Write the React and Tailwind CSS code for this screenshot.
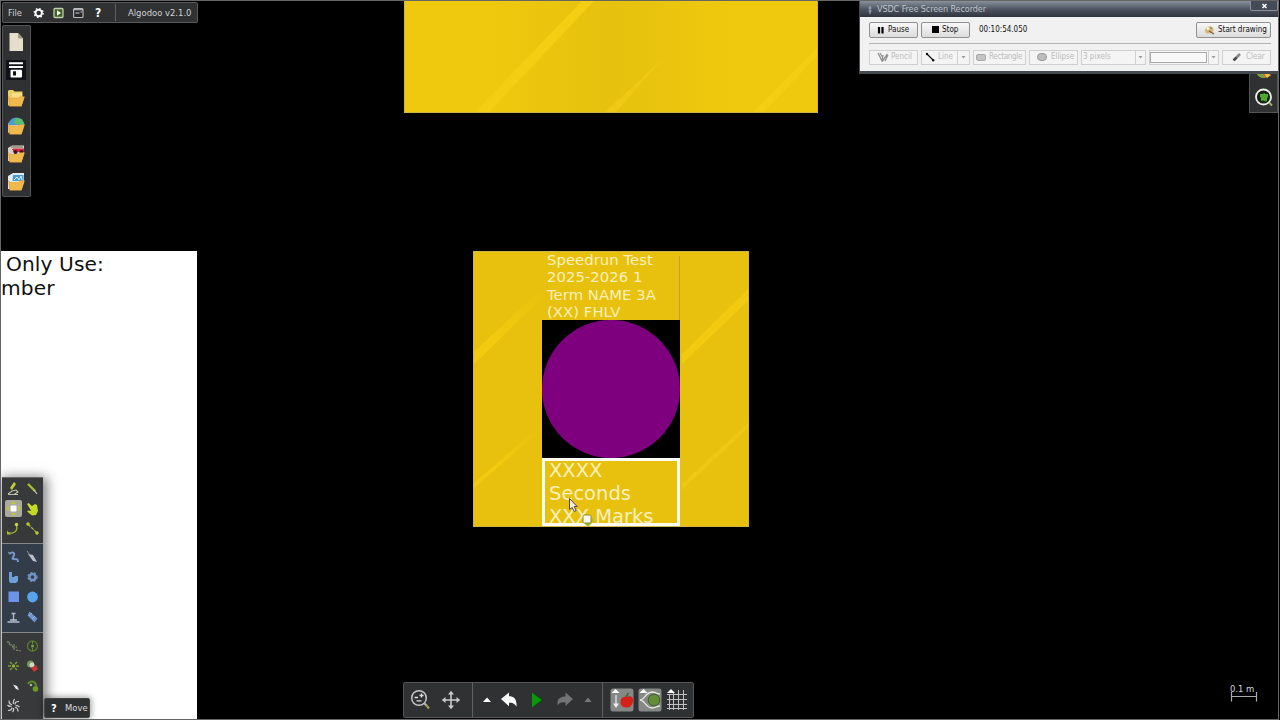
import React from "react";

const UI = "font-['DejaVu_Sans_Condensed','DejaVu_Sans',sans-serif] [font-stretch:condensed]";

function Icon({ w = 20, h = 20, className = "", children }) {
  return (
    <svg width={w} height={h} viewBox={`0 0 ${w} ${h}`} className={`block shrink-0 ${className}`} fill="none">
      {children}
    </svg>
  );
}

function MenuBar() {
  return (
    <div className={`absolute left-[2px] top-[2px] flex h-[21px] w-[196px] items-center rounded-[2px] border border-[#5a5a5c] bg-[#303133] text-[9.4px] leading-none text-[#d2d2d2] ${UI}`}>
      <span className="w-[26px] pl-[5px]">File</span>
      <Icon w={20} h={18}>
        <circle cx="9.7" cy="9" r="3.2" stroke="#fff" strokeWidth="1.9" />
        <circle cx="9.7" cy="9" r="4.5" stroke="#fff" strokeWidth="1.3" strokeDasharray="1.6 1.93" />
      </Icon>
      <Icon w={20} h={18}>
        <rect x="5" y="4.500" width="9" height="9" rx="1" fill="#3f5f28" stroke="#c2cfae" strokeWidth="1.3" />
        <path d="M8 6.300v5.400L12 9z" fill="#f4fff0" />
      </Icon>
      <Icon w={20} h={18}>
        <rect x="4.600" y="4.500" width="9.400" height="9" rx="1" fill="#252628" stroke="#bfbfbf" strokeWidth="1.1" />
        <path d="M5 5.800h9M6.500 9h4M11.500 8h1.500" stroke="#d8d8d8" strokeWidth="1.1" />
      </Icon>
      <span className="w-[26px] pl-[6px] text-[12px] font-bold text-white">?</span>
      <span className="h-[17px] w-px bg-[#606062]" />
      <span className="whitespace-nowrap pl-[12px]">Algodoo v2.1.0</span>
    </div>
  );
}

function Folder({ children }) {
  return (
    <Icon>
      {children}
      <path d="M2 7.500l1.500 11H15.500L18.800 8.500H14L12.500 10H4z" fill="#e9a83c" />
      <path d="M3.700 10.500L12.800 10.500 14.500 9H18.300L15.500 18H4.500z" fill="#f0b950" />
    </Icon>
  );
}

function FileBar() {
  return (
    <div className="absolute left-[2px] top-[25px] flex h-[172px] w-[29px] flex-col items-start gap-2 rounded-[2px] border border-[#555557] bg-[#303133] pl-[3px] pt-[6px]">
      <Icon>
        <path d="M3.500 1H12L17 6.500V19H3.500z" fill="#e5decb" />
        <path d="M12 1V6.500H17z" fill="#a39d8c" />
      </Icon>
      <Icon>
        <rect width="20" height="20" fill="#111118" />
        <path d="M3 3.200H17M3 7H17" stroke="#fff" strokeWidth="1.900" />
        <rect x="4.500" y="9.800" width="11.500" height="7.600" rx="1" fill="#fff" />
        <rect x="7" y="11.300" width="3" height="4.200" fill="#111" />
      </Icon>
      <Folder>
        <path d="M2 17V3l1-1h4l1.500 1.500H16.500V10L3 18z" fill="#eccf60" />
        <path d="M6 5h10v4H6z" fill="#f5df86" />
      </Folder>
      <Folder>
        <path d="M2 17V7H17v4z" fill="#d8c497" />
        <path d="M2 9a8.300 8.300 0 0 1 16.500 0z" fill="#4a9bd0" />
        <path d="M10 2l6 1 2.500 5.500H10L8 6z" fill="#5dbb69" />
      </Folder>
      <Folder>
        <path d="M2 17V4l4-2.500H18V10L4 17z" fill="#d7d0c6" />
        <path d="M5 3h12M6 5.500h3" stroke="#665" strokeWidth="1" />
        <path d="M7 4.500H18V8H7z" fill="#d32d4b" />
        <circle cx="9.500" cy="8" r="2" fill="#421018" /><circle cx="15.500" cy="8" r="2" fill="#421018" />
      </Folder>
      <Folder>
        <path d="M2 17V4L7 1H18V10L4 17z" fill="#e0eaf0" />
        <path d="M7 3h10.500v6H6z" fill="#4b9ad8" />
        <path d="M4 5v5M6 4v5M8 8l3-3 2 3 2-4 1 4" stroke="#e8f5ff" strokeWidth=".9" />
      </Folder>
    </div>
  );
}

const T = ({ children }) => <Icon w={19} h={20}>{children}</Icon>;

function ToolPanel() {
  return (
    <div className="absolute left-[2px] top-[477px] flex h-[242px] w-[41px] flex-col border-t border-[#69696a] bg-[#37393b] shadow-[2px_2px_11px_2px_rgba(0,0,0,0.5)]">
      <div className="flex h-[66px] flex-wrap content-start border-b border-[#868789] pl-[2px] pt-[1px]">
        <T><path d="M6 9l4-6 2 2-4 6z" fill="#c0d030" /><path d="M4 15l4-3 4-1 2 2-4 2.500H4M9 15.500h5" stroke="#c0c4ac" strokeWidth="1.100" /></T>
        <T><path d="M5 5l7 7" stroke="#a8bc30" strokeWidth="2.400" /><path d="M11 11l3 4" stroke="#c7cabb" strokeWidth="1.200" /></T>
        <T>
          <rect x="1" y="1" width="17" height="17" rx="2" fill="#aaa9a2" />
          <path d="M9.500 2l3 3h-6zM9.500 17l3-3h-6zM2 9.500l3-3v6zM17 9.500l-3-3v6z" fill="#bcc637" />
          <rect x="6.500" y="6.500" width="6" height="6" rx="1" fill="#fff" />
        </T>
        <T><path d="M4 5l1.500-1L9 7l3-2 2 1 1 6-2 4-4 .5-5-4 1-1 3 .5-1-2z" fill="#c5da22" /></T>
        <T><path d="M5 13.500c5 2 9-2 7.500-7" stroke="#a9b928" strokeWidth="1.300" /><circle cx="12.500" cy="5.500" r="1.700" fill="#cbd849" /><path d="M3 11.500v4h4z" fill="#acb830" /></T>
        <T><path d="M5 5l9 9" stroke="#a9b928" strokeWidth="1.300" strokeDasharray="3.500 1" /><circle cx="5" cy="5" r="1.700" fill="#bdca35" /><circle cx="14" cy="14" r="1.700" fill="#bdca35" /></T>
      </div>
      <div className="flex h-[89px] flex-wrap content-start border-b border-[#868789] bg-[#333d49] pl-[2px] pt-[3px]">
        <T><path d="M5 7c3-2 6-2 5 1s-3 4 0 4 4 0 4 3" stroke="#7896c9" strokeWidth="2" /><path d="M4 5l3 2" stroke="#8998b0" /></T>
        <T><path d="M5 7l5 1 4 7-4-1z" fill="#b9c1ca" /><path d="M4 4l3 4" stroke="#8c949d" strokeWidth="1" /></T>
        <T><path d="M5 5h3v5h2l1-1h3v5l-2 2H6l-1-2z" fill="#6f9fd8" /></T>
        <T><circle cx="9.500" cy="10" r="3.100" stroke="#7294c2" strokeWidth="2.500" /><circle cx="9.500" cy="10" r="4.500" stroke="#7294c2" strokeWidth="1.200" strokeDasharray="2 1.700" /></T>
        <T><rect x="4.500" y="4.500" width="10.500" height="10.500" fill="#6b94e8" /></T>
        <T><circle cx="9.500" cy="10" r="5.400" fill="#57a3ed" /></T>
        <T><path d="M3.500 15h12M9.500 14V6M7.500 6.500h4M6 13h7" stroke="#b4bdd3" strokeWidth="1.300" /></T>
        <T><path d="M6.500 4.500l8 7-3 4-7-7z" fill="#6e91cb" /><path d="M6 9l3-3M9 12l3-3" stroke="#9bb6e4" /></T>
      </div>
      <div className="flex flex-wrap content-start pl-[2px] pt-[3px]">
        <T><path d="M3 6h3l-1 3h3l1 2M10 8v6M8 11h5M12 14l5 1" stroke="#8a9a70" strokeWidth="1" strokeDasharray="2.500 1" /></T>
        <T><circle cx="9.500" cy="10" r="5" stroke="#557d27" strokeWidth="1.300" /><circle cx="9.500" cy="10" r="1.500" fill="#78a336" /><path d="M9.500 5v3M9.500 12v3" stroke="#648a30" /></T>
        <T><circle cx="9.500" cy="10" r="1.700" fill="#92b330" /><path d="M4 10h3M12 10h3M6 6l2 2M13 6l-2 2M6 14l2-2M13 14l-2-2" stroke="#7e9f30" strokeWidth="1.500" /></T>
        <T><circle cx="7.500" cy="8" r="3.500" fill="#719b51" /><circle cx="9" cy="9" r="2.500" fill="#d0d7c8" /><path d="M8 12l5-3 2 4-4 3z" fill="#cf3530" /></T>
        <T><path d="M9 8.500l4 1.500 2 4-3-1z" fill="#f0e9e6" /></T>
        <T><path d="M5 8c2-4 7-3 8 1v3" stroke="#5b8a25" strokeWidth="2" /><circle cx="12.500" cy="13" r="2.800" fill="#6a9c2a" /><circle cx="8" cy="9" r="1.300" fill="#a1b589" /></T>
        <T>
          <path d="M9.500 8c-1-2 0-3 1-5M11 8.500c0-2 1-3 4-3M11.500 10c2-1 3 0 4 1M11 11.500c2 0 3 1 3 4M9.500 12c1 2 0 3-1 4M8 11.500c0 2-1 3-4 3M7.500 10c-2 1-3 0-4-1M8 8.500c-2 0-3-1-3-4" stroke="#d4d4d4" strokeWidth="1.200" />
        </T>
      </div>
    </div>
  );
}

function BottomBar() {
  return (
    <div className="absolute left-[403px] top-[682px] flex h-[36px] w-[291px] items-center rounded-[2px] border border-[#555557] bg-[#303133]">
      <div className="flex h-full w-[69px] items-center gap-[8px] border-r border-[#626264] pl-[5px]">
        <Icon w={24} h={24}>
          <circle cx="10" cy="10" r="7.300" stroke="#c8c8c8" strokeWidth="1.500" />
          <path d="M15.500 15.500l2 2" stroke="#bbb" strokeWidth="2" /><path d="M17 17l3 3.500" stroke="#a39955" strokeWidth="2.200" />
          <path d="M5.500 9.500h3.500M10.500 7.500h4M12.500 5.500v4M7.500 12.800h5" stroke="#e0e0e0" strokeWidth="1.300" />
        </Icon>
        <Icon>
          <path d="M10 3v14M3 10h14" stroke="#cacaca" strokeWidth="1.600" />
          <path d="M10 .8l3 3.700H7zM10 19.200l3-3.700H7zM.8 10l3.700-3v6zM19.200 10l-3.700-3v6z" fill="#cacaca" />
        </Icon>
      </div>
      <div className="flex h-full w-[130px] items-center border-r border-[#626264] pl-[10px]">
        <Icon w={8} h={6}><path d="M4 .5L8 5H0z" fill="#fff" /></Icon>
        <Icon className="ml-[8px]"><path d="M2 9L10 2.500v3.700c5 0 8 2.500 7.500 10.500-2-3.500-4-4-7.500-4v3.500z" fill="#fafafa" /></Icon>
        <Icon className="ml-[8px]"><path d="M6 2.500v15l10.500-7.500z" fill="#104b10" /><path d="M5 2.500v15L14.500 10z" fill="#09970b" /></Icon>
        <Icon className="ml-[8px]"><path d="M18 9L10.500 2.500v4c-5 0-8 2-8 7v2c2-3 4-3.500 8-3v3.500z" fill="#737375" /></Icon>
        <Icon w={8} h={6} className="ml-[9px]"><path d="M4 .5L7.500 5H.5z" fill="#777779" /></Icon>
      </div>
      <div className="flex items-center gap-[4px] pl-[7px]">
        <Icon w={24} h={24}>
          <rect x=".5" y=".5" width="23" height="23" rx="2.500" fill="#868787" />
          <path d="M1.500 5l4-4 4 4z" fill="#fff" />
          <path d="M6 7v10" stroke="#eee" strokeWidth="1.200" /><path d="M3 15.500h6l-3 4.500z" fill="#eee" />
          <path d="M16.500 9c5-2.500 7.500 1 6.500 5-1 4-4 6-7 5.500-4 0-6-3-5.500-6.500 .5-4 4-5 6-4z" fill="#d4221b" />
          <path d="M16 9l2.500-4" stroke="#4d6b27" strokeWidth="1.800" />
        </Icon>
        <Icon w={24} h={24}>
          <rect x=".5" y=".5" width="23" height="23" rx="2.500" fill="#868787" />
          <circle cx="16" cy="12" r="5.800" fill="#628c38" stroke="#415f2d" />
          <path d="M1.500 5l4-4 4 4z" fill="#fff" />
          <path d="M2 12c5 0 5-7.500 12-8 4 0 5 2 8 2M2 12c5 0 5 7.500 12 8 4 0 5-2 8-2" stroke="#e1ead6" strokeWidth="1.300" />
        </Icon>
        <Icon w={24} h={24}>
          <path d="M3.500 6v16M7.500 4v18M12.500 2v20M17.500 2v20M1 6.500h20M1 11.500h20M1 16.500h20M1 20.500h20" stroke="#c1c1c1" strokeWidth="1" />
          <path d="M1 5l4-4 4 4z" fill="#fff" />
        </Icon>
      </div>
    </div>
  );
}

function Btn({ className, children }) {
  return (
    <div className={`flex h-[16px] shrink-0 items-center rounded-[2px] border border-[#909090] bg-linear-to-b from-[#f8f8f8] to-[#dcdcdc] text-[#111] ${className}`}>{children}</div>
  );
}
function Off({ className, children }) {
  return (
    <div className={`flex h-[15px] shrink-0 items-center border border-[#cfcfcf] bg-[#f4f4f4] text-[#bcbcbc] ${className}`}>{children}</div>
  );
}
function Drop({ className = "" }) {
  return (
    <span className={`ml-auto flex h-full items-center justify-center border-l border-[#cfcfcf] ${className}`}>
      <Icon w={5} h={4}><path d="M.5 1h4L2.500 3.500z" fill="#999" /></Icon>
    </span>
  );
}

function Recorder() {
  return (
    <div className={`absolute left-[859px] top-[1px] flex h-[73px] w-[420px] flex-col border-x border-b-[3px] border-[#454950] bg-[#f1f1f1] text-[8px] leading-none whitespace-nowrap ${UI}`}>
      <div className="flex h-[16px] shrink-0 items-center bg-linear-to-b from-[#8a909c] via-[#505763] to-[#30353e] pl-[7px] pt-px text-[9px] text-[#bfc3ca]">
        <Icon w={6} h={10} className="mr-[4px]"><path d="M3 1v8M1.500 3h3M1.500 6h3" stroke="#9aabb8" strokeWidth="1.200" /></Icon>
        <span className="tracking-[-0.1px]">VSDC Free Screen Recorder</span>
        <span className="-mt-px ml-auto flex h-[10px] w-[28px] items-center justify-center self-start rounded-b-[2px] border border-t-0 border-[#8b909a] bg-[#454b56]">
          <Icon w={7} h={6}><path d="M1.500 1l4 4M5.500 1l-4 4" stroke="#fff" strokeWidth="1.500" /></Icon>
        </span>
      </div>
      <div className="ml-[9px] mr-[7px] flex h-[27px] items-center gap-[3px] border-b border-[#b2b2b2]">
        <Btn className="w-[49px] pl-[7px]">
          <Icon w={8} h={8} className="mr-[3px]"><path d="M2 1v6.500M5.500 1v6.500" stroke="#000" strokeWidth="2.200" /></Icon>Pause
        </Btn>
        <Btn className="w-[49px] pl-[10px]"><span className="mr-[3px] h-[7px] w-[7px] bg-black" />Stop</Btn>
        <span className="pl-[6px] text-[#111]">00:10:54.050</span>
        <Btn className="ml-auto w-[75px] pl-[7px]">
          <Icon w={11} h={10} className="mr-[3px]">
            <path d="M1 6c0-4 5-6 8-3 2 3-1 4-2 5-2 1-6 1-6-2z" fill="#d6b978" /><circle cx="4" cy="3.500" r="1.300" fill="#fff" /><circle cx="7" cy="3" r="1" fill="#70954b" /><path d="M5 6l5 3" stroke="#775331" strokeWidth="1.200" />
          </Icon>Start drawing
        </Btn>
      </div>
      <div className="ml-[9px] mr-[7px] flex h-[28px] items-center gap-[3px]">
        <Off className="w-[49px] pl-[7px]">
          <Icon w={12} h={10} className="mr-[2px]"><path d="M1 1l4 8 1-6M3 1l3 5M5.500 9l5-7M8 9l3-6" stroke="#929292" strokeWidth="1.300" /></Icon>Pencil
        </Off>
        <Off className="w-[49px] pl-[3px]">
          <Icon w={10} h={10} className="mr-[3px]"><path d="M1.500 1.500l7 7" stroke="#111" strokeWidth="1.200" /><circle cx="2" cy="2" r="1.200" fill="#111" /><circle cx="8.200" cy="8.200" r="1.200" fill="#111" /></Icon>Line<Drop className="w-[12px]" />
        </Off>
        <Off className="w-[53px] pl-[2px]"><span className="mr-[3px] h-[7px] w-[10px] rounded-[2px] border border-[#aaa] bg-[#c4c4c4]" /><span className="tracking-[-0.3px]">Rectangle</span></Off>
        <Off className="w-[49px] pl-[7px]"><span className="mr-[4px] h-[8px] w-[10px] rounded-full border border-[#999] bg-[#bdbdbd]" />Ellipse</Off>
        <Off className="w-[65px] pl-[1px] text-[#777]">3 pixels<Drop className="w-[10px]" /></Off>
        <Off className="w-[70px]"><span className="h-[11px] w-[57px] border border-[#aaa] bg-[#f8f8f8]" /><Drop className="w-[10px]" /></Off>
        <Off className="w-[49px] pl-[9px]">
          <Icon w={11} h={10} className="mr-[3px]"><path d="M2 8l6-6" stroke="#888" strokeWidth="2.600" /><path d="M1.500 8.500l3-3" stroke="#444" strokeWidth="2.400" /></Icon>Clear
        </Off>
      </div>
    </div>
  );
}

function TopBlock() {
  return (
    <div className="absolute left-[404px] top-[1px] h-[112px] w-[414px] border-x border-b border-[#cdb541] bg-linear-to-r from-[#efc90d] from-20% via-[#e6c10e] via-50% to-[#efc90d] to-80%">
      <Icon w={412} h={111}>
        <path d="M70 111L177 0h12L84 111z" fill="#f4ce12" />
        <path d="M200 111L260 56 211 111z" fill="#efc915" />
        <path d="M348 111L412 47v8l-53 56z" fill="#f4ce12" />
      </Icon>
    </div>
  );
}

function Stage() {
  return (
    <div className="absolute left-[473px] top-[251px] h-[276px] w-[276px] border border-[#cfb64a] bg-[#e7c10d]">
      <svg width="274" height="274" viewBox="0 0 274 274" className="absolute left-0 top-0">
        <defs>
          <linearGradient id="fade" x1="0" x2="1" y1="1" y2="0">
            <stop offset="0.3" stopColor="#f2cb10" /><stop offset="1" stopColor="#e7c10d" />
          </linearGradient>
        </defs>
        <path d="M0 100L70 35v9L0 112z" fill="url(#fade)" />
        <path d="M208 102L274 37v12l-66 63z" fill="#f1ca11" />
        <path d="M0 231L68 172v5L0 236z" fill="url(#fade)" />
        <path d="M208 232L274 171v5l-66 62z" fill="#eec814" />
        <path d="M205.500 4V68" stroke="#c4a51a" strokeWidth="1" />
      </svg>
      <div className="relative mx-auto flex h-full w-[138px] flex-col font-['DejaVu_Sans',sans-serif] text-[#fbf0bd]">
        <div className="h-[68px] shrink-0 pl-[5px] text-[14.8px] leading-[17.300px] tracking-[0.06px] whitespace-nowrap">
          <div className="-mt-px">Speedrun Test<br />2025-2026 1<br />Term NAME 3A<br />(XX) FHLV</div>
        </div>
        <div className="h-[138px] shrink-0 bg-black"><div className="h-[138px] w-[138px] rounded-full bg-[#7f007f]" /></div>
        <div className="h-[68px] shrink-0 overflow-hidden border-[3px] border-[#fffef2] pl-[4px] text-[19.500px] leading-[23px] whitespace-nowrap">
          <div className="-mt-[2px]">XXXX<br />Seconds<br />XXX Marks</div>
        </div>
      </div>
    </div>
  );
}

export default function App() {
  return (
    <div className="relative h-[720px] w-[1280px] overflow-hidden bg-black">
      <TopBlock />
      <div className="absolute left-[1px] top-[251px] h-[468px] w-[196px] overflow-hidden bg-white font-['DejaVu_Sans',sans-serif] text-[20.200px] leading-[23.500px] tracking-[0.08px] whitespace-nowrap text-[#111]">
        <div className="mt-[2px] pl-[5px]">Only Use:</div>
        <div>mber</div>
        <div className="absolute inset-0"><div className="absolute -left-px -top-[251px]"><ToolPanel /></div></div>
      </div>
      <Stage />
      <svg width="34" height="30" viewBox="0 0 34 30" className="absolute left-[567px] top-[497px]">
        <path d="M14 23l3 2h6l4-5-2 6-4 4-4-4z" fill="#a7b52c" />
        <rect x="16" y="18" width="8" height="8" rx="1.500" fill="#fbfbef" stroke="#839332" />
        <path d="M2.500 1.500v11l2.700-2 2 4 2-1-2-4h3z" fill="#f6eee7" stroke="#55463a" strokeWidth="1" />
      </svg>
      <MenuBar />
      <FileBar />
      <div className={`absolute left-[44px] top-[698px] flex h-[20px] w-[46px] items-center rounded-[2px] border border-[#444] bg-[#303133] text-[9.400px] leading-none text-[#dcdcdc] shadow-[0_0_6px_1px_rgba(0,0,0,0.4)] ${UI}`}>
        <span className="w-[20px] pl-[6px] text-[11px] font-bold text-white">?</span><span>Move</span>
      </div>
      <BottomBar />
      <div className="absolute left-[1249px] top-[60px] flex h-[53px] w-[29px] flex-col items-center gap-[8px] border border-[#555557] bg-[#303133]">
        <Icon w={18} h={18}><circle cx="9" cy="9" r="8" fill="#e66a31" /><path d="M2 13a8 8 0 0 0 8 4l-2-5z" fill="#77a638" /><path d="M9 12l3 5 4-3z" fill="#edc34b" /></Icon>
        <Icon w={20} h={20}>
          <circle cx="9.500" cy="10" r="7.500" fill="#172018" stroke="#eef0e8" strokeWidth="1.800" />
          <path d="M6 7h3l1-1 1.500 1H14v3l-1 1v3l-2 .5-1-1-3 .5V11l-1-1z" fill="#4ca82e" /><path d="M15.500 16l2.500 2.500" stroke="#a9ad64" strokeWidth="2" />
        </Icon>
      </div>
      <Recorder />
      <div className={`absolute left-[1230px] top-[684px] flex w-[27px] flex-col text-[9.400px] leading-[10px] text-[#d8d8d8] whitespace-nowrap ${UI}`}>
        <span>0.1 m</span>
        <Icon w={28} h={10} className="-mt-[2px]"><path d="M1.500 0v9.500M26.500 0v9.500M1.500 4.500h25" stroke="#aaa" strokeWidth="1.200" /></Icon>
      </div>
      <div className="pointer-events-none absolute inset-y-0 left-0 w-[1279px] border border-[#666]" />
    </div>
  );
}
